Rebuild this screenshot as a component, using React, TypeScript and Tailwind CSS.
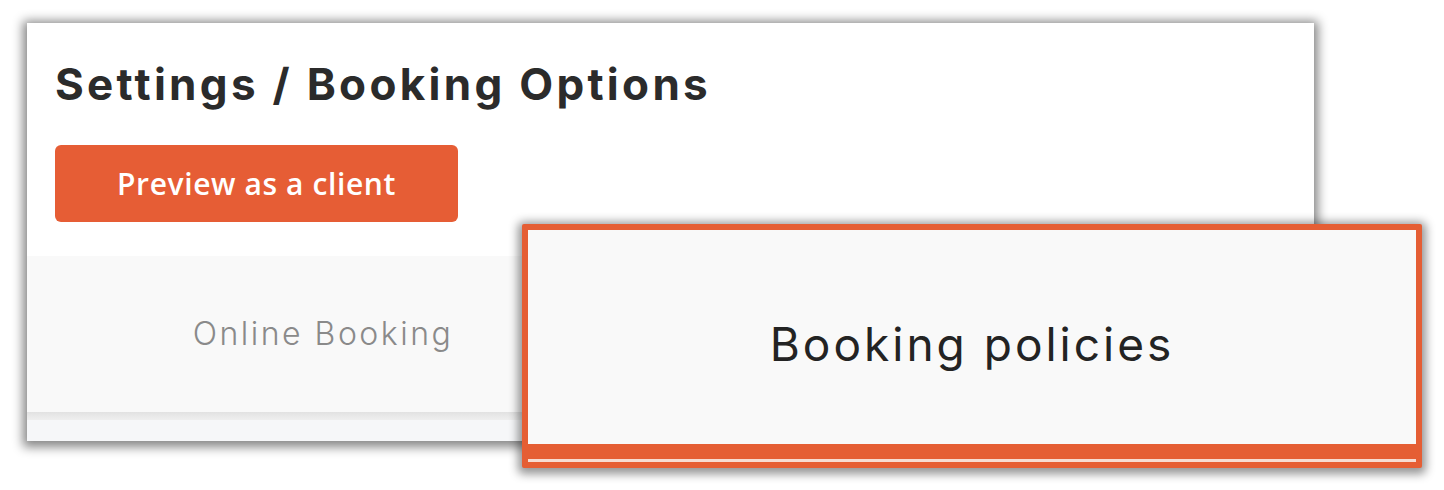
import React from "react";

export default function App() {
  return (
    <div className="relative w-[1444px] h-[490px] bg-white overflow-hidden">
      <div className="pt-[23px] pl-[27px]">
        <div className="w-[1287px] h-[418px] bg-white shadow-[0_2px_10px_4px_rgba(0,0,0,0.48)] flex flex-col">
          <div className="flex flex-col items-start pl-[28px] pt-[34px] pb-[34px] bg-white">
            <h1
              className="text-[#2b2b2b] font-bold text-[44px] leading-[54px] tracking-[3.3px]"
              style={{ fontFamily: "Inter, 'Noto Sans', sans-serif" }}
            >
              Settings / Booking Options
            </h1>
            <button
              className="mt-[34px] w-[403px] h-[77px] rounded-[6px] bg-[#e65d35] text-white text-[30px] font-semibold tracking-[0.6px]"
              style={{ fontFamily: "'Open Sans', sans-serif" }}
            >
              Preview as a client
            </button>
          </div>
          <div className="h-[156px] bg-[#f9f9f9] flex">
            <div
              className="w-[592px] flex items-center justify-center text-[#8a8a8a] text-[32px] font-light tracking-[2.5px]"
              style={{ fontFamily: "Inter, 'Noto Sans', sans-serif" }}
            >
              Online Booking
            </div>
          </div>
          <div className="h-[8px] bg-gradient-to-b from-[#e2e2e2] to-[#efefef]" />
          <div className="flex-1 bg-[#f6f7f9]" />
        </div>
      </div>

      <div className="absolute left-[522px] top-[224px] w-[900px] h-[244px] border-[6px] border-[#e55e34] rounded-[2px] bg-[#f9f9f9] shadow-[0_2px_10px_4px_rgba(0,0,0,0.42)] flex flex-col">
        <div
          className="flex-1 flex items-center justify-center pt-[14px] text-[#232323] text-[46px] font-normal tracking-[3px]"
          style={{ fontFamily: "Inter, 'Noto Sans', sans-serif" }}
        >
          Booking policies
        </div>
        <div className="h-[15px] bg-[#e55e34]" />
        <div className="h-[3px] bg-[#f6dcd2]" />
      </div>
    </div>
  );
}
